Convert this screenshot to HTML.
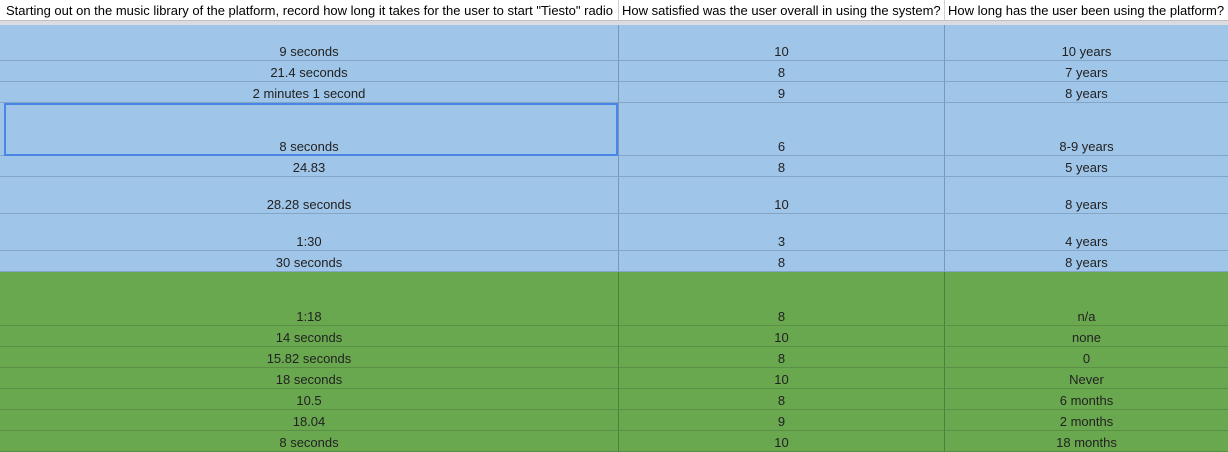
<!DOCTYPE html>
<html><head><meta charset="utf-8"><style>
body{margin:0;width:1228px;height:452px;overflow:hidden;background:#fff;font-family:"Liberation Sans",Arial,sans-serif;font-size:13px;color:#222;position:relative}
.c{position:absolute;box-sizing:border-box;display:flex;align-items:flex-end;justify-content:center;padding-bottom:1px;line-height:15px;white-space:nowrap}
.h{position:absolute;top:0;height:20px;line-height:21px;white-space:nowrap;color:#000;font-size:13px}
</style></head><body>
<div class="h" style="left:6px">Starting out on the music library of the platform, record how long it takes for the user to start "Tiesto" radio</div>
<div class="h" style="left:622px">How satisfied was the user overall in using the system?</div>
<div class="h" style="left:948px">How long has the user been using the platform?</div>
<div style="position:absolute;left:618px;top:0;width:1px;height:20px;background:#d0d0d0"></div>
<div style="position:absolute;left:944px;top:0;width:1px;height:20px;background:#d0d0d0"></div>
<div style="position:absolute;left:0;top:20px;width:1228px;height:5px;background:#dadce0;border-top:1px solid #c0c0c0;box-sizing:border-box"></div>
<div id="t"></div>
<script>
var rows=[[25,61,"9 seconds","10","10 years",0],[61,82,"21.4 seconds","8","7 years",0],[82,103,"2 minutes 1 second","9","8 years",0],[103,156,"8 seconds","6","8-9 years",0],[156,177,"24.83","8","5 years",0],[177,214,"28.28 seconds","10","8 years",0],[214,251,"1:30","3","4 years",0],[251,272,"30 seconds","8","8 years",0],[272,326,"1:18","8","n/a",1],[326,347,"14 seconds","10","none",1],[347,368,"15.82 seconds","8","0",1],[368,389,"18 seconds","10","Never",1],[389,410,"10.5","8","6 months",1],[410,431,"18.04","9","2 months",1],[431,452,"8 seconds","10","18 months",1]];
var cols=[[0,618],[618,944],[944,1228]];var h="";
rows.forEach(function(r){var g=r[5];var bg=g?"#6aa84f":"#9fc5e8";var ln=g?"#5b8f45":"#84a6c6";
cols.forEach(function(c,i){h+='<div class="c" style="left:'+c[0]+'px;top:'+r[0]+'px;width:'+(c[1]-c[0])+'px;height:'+(r[1]-r[0])+'px;background:'+bg+';border-bottom:1px solid '+ln+';'+(i>0?'border-left:1px solid '+(g?'#4f7f3b':'#7d97b3')+';':'')+'">'+r[2+i]+'</div>';});});
h+='<div style="position:absolute;left:4px;top:103px;width:614px;height:53px;border:2px solid #4a86e8;box-sizing:border-box"></div>';
document.getElementById("t").innerHTML=h;
</script>
</body></html>
